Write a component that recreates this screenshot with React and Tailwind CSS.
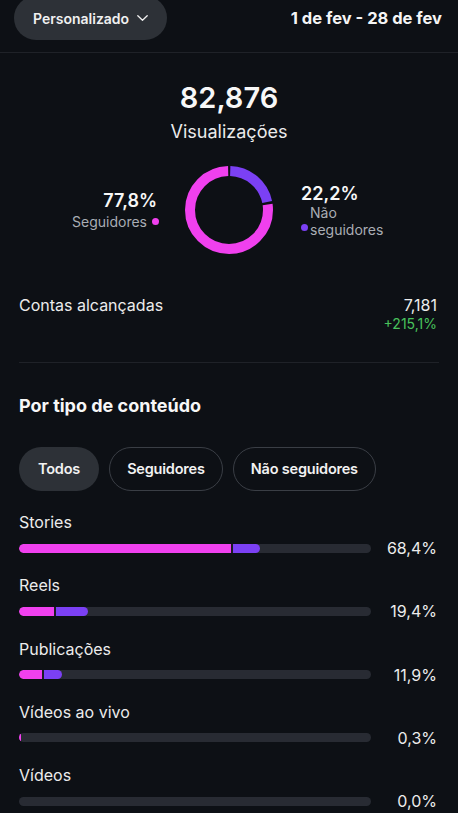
import React from "react";

const PINK = "#f040ee";
const PURPLE = "#7b40f4";

function Donut() {
  const r = 39;
  const C = 2 * Math.PI * r;
  const gap = 2.5;
  const purple = 0.222 * C;
  const pink = 0.778 * C;
  return (
    <svg width="88" height="88" viewBox="0 0 88 88">
      <g transform="rotate(-90 44 44)">
        <circle
          cx="44"
          cy="44"
          r={r}
          fill="none"
          stroke={PURPLE}
          strokeWidth="10"
          strokeDasharray={`${purple - gap} ${C}`}
          strokeDashoffset={-gap / 2}
        />
        <circle
          cx="44"
          cy="44"
          r={r}
          fill="none"
          stroke={PINK}
          strokeWidth="10"
          strokeDasharray={`${pink - gap} ${C}`}
          strokeDashoffset={-(purple + gap / 2)}
        />
      </g>
    </svg>
  );
}

function Bar({ label, pink, purple, pct }) {
  return (
    <div className="h-[63.3px] flex flex-col">
      <div className="text-[16px] leading-[22px] text-[#ececec]">{label}</div>
      <div className="mt-[5px] h-[20px] flex items-center">
        <div className="w-[352px] h-[9px] rounded-full bg-[#282b33] overflow-hidden flex">
          {pink > 0 && (
            <div className="h-full rounded-l-full" style={{ width: pink, background: PINK }} />
          )}
          {purple > 0 && (
            <>
              <div className="h-full w-[2px] bg-[#1a1c22]" />
              <div className="h-full rounded-r-full" style={{ width: purple, background: PURPLE }} />
            </>
          )}
        </div>
        <div className="flex-1 text-right text-[16px] leading-[20px] text-[#ececec]">{pct}</div>
      </div>
    </div>
  );
}

export default function App() {
  return (
    <div
      className="w-[458px] h-[813px] overflow-hidden bg-[#0d1015] text-white"
      style={{ fontFamily: "Inter, 'Liberation Sans', sans-serif" }}
    >
      {/* Header */}
      <div className="h-[53px] flex items-start justify-between border-b border-[#1f2228]">
        <div className="ml-[14px] -mt-[4px] h-[44px] w-[153px] rounded-full bg-[#2d3137] flex items-center pl-[19px] gap-[8px]">
          <span className="text-[14px] font-semibold text-[#f0f0f0]">Personalizado</span>
          <svg width="11" height="6" viewBox="0 0 11 6" fill="none">
            <path d="M0.8 0.8l4.7 4.5 4.7-4.5" stroke="#f0f0f0" strokeWidth="1.3" strokeLinecap="round" strokeLinejoin="round" />
          </svg>
        </div>
        <div className="mr-[16px] mt-[8px] text-[16.5px] leading-[20px] font-bold text-[#f5f5f5]">
          1 de fev - 28 de fev
        </div>
      </div>

      {/* Summary */}
      <div className="flex flex-col items-center">
        <div className="mt-[27px] text-[29px] leading-[36px] font-semibold text-[#f7f7f7]">82,876</div>
        <div className="mt-[4px] text-[18px] leading-[24px] text-[#ececec]">Visualizações</div>
      </div>

      <div className="mt-[22px] grid grid-cols-[1fr_auto_1fr] items-center">
        <div className="flex flex-col items-end pr-[27px]">
          <div className="text-[18px] leading-[22px] font-semibold text-[#f7f7f7] mr-[1px]">77,8%</div>
          <div className="flex items-center gap-[5px] text-[14px] leading-[18px] text-[#a9adb4] mt-[1px] mr-[-1px]">
            <span>Seguidores</span>
            <span className="w-[7px] h-[7px] rounded-full" style={{ background: PINK }} />
          </div>
        </div>
        <Donut />
        <div className="flex flex-col items-start pl-[28px]">
          <div className="text-[18px] leading-[22px] font-semibold text-[#f7f7f7]">22,2%</div>
          <div className="flex items-start gap-[2px] mt-[-1px]">
            <span className="w-[7px] h-[7px] rounded-full mt-[20px]" style={{ background: PURPLE }} />
            <span className="text-[14px] leading-[17px] text-[#a9adb4]">
              Não
              <br />
              seguidores
            </span>
          </div>
        </div>
      </div>

      {/* Contas */}
      <div className="px-[19px]">
        <div className="mt-[40px] flex justify-between items-start pr-[2px]">
          <div className="text-[16px] leading-[22px] text-[#ececec]">Contas alcançadas</div>
          <div className="flex flex-col items-end">
            <div className="text-[16px] leading-[22px] text-[#ececec]">7,181</div>
            <div className="text-[14px] leading-[18px] text-[#48c25c] -mt-[1px]">+215,1%</div>
          </div>
        </div>

        <div className="mt-[29px] h-px bg-[#1f2228]" />

        <div className="mt-[31px] text-[18px] leading-[24px] font-bold text-[#f7f7f7]">Por tipo de conteúdo</div>

        <div className="mt-[29px] flex gap-[10px]">
          <div className="h-[44px] px-[19px] rounded-full bg-[#2d3137] flex items-center text-[14.5px] tracking-[-0.2px] font-semibold text-[#f2f2f2]">
            Todos
          </div>
          <div className="h-[44px] px-[17px] rounded-full border border-[#3a3e45] flex items-center text-[14.5px] tracking-[-0.2px] font-semibold text-[#f2f2f2]">
            Seguidores
          </div>
          <div className="h-[44px] px-[17px] rounded-full border border-[#3a3e45] flex items-center text-[14.5px] tracking-[-0.2px] font-semibold text-[#f2f2f2]">
            Não seguidores
          </div>
        </div>

        <div className="mt-[20px] pr-[2px]">
          <Bar label="Stories" pink={212} purple={27} pct="68,4%" />
          <Bar label="Reels" pink={35} purple={32} pct="19,4%" />
          <Bar label="Publicações" pink={23} purple={18} pct="11,9%" />
          <Bar label="Vídeos ao vivo" pink={2} purple={0} pct="0,3%" />
          <Bar label="Vídeos" pink={0} purple={0} pct="0,0%" />
        </div>
      </div>
    </div>
  );
}
